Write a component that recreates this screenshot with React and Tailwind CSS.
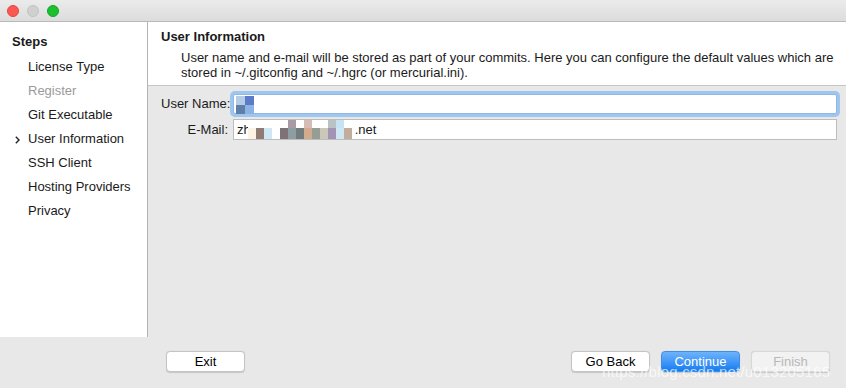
import React from 'react';

const steps = [
  { label: 'License Type' },
  { label: 'Register', disabled: true },
  { label: 'Git Executable' },
  { label: 'User Information', current: true },
  { label: 'SSH Client' },
  { label: 'Hosting Providers' },
  { label: 'Privacy' },
];

// pixelated blur over the e-mail address
const blurTop = ['#ffffff', '#ffffff', '#ffffff', '#ffffff', '#ffffff', '#a89ba4', '#ffffff', '#d6bcb2', '#ffffff', '#ffffff', '#b9c3c6', '#c6e3f3'];
const blurBottom = ['#fdf3e4', '#8f7b73', '#cfe6f4', '#ffffff', '#7f7277', '#8d9ea3', '#737b7c', '#d2ab8f', '#969c96', '#cbc7b9', '#a294b4', '#cfe6f4', '#c2ad9d'];

const Button = ({ children, variant = 'default' }) => {
  const styles = {
    default: 'bg-white border-[#c4c4c4] text-black',
    primary: 'bg-gradient-to-b from-[#6cb3fa] to-[#0b7cf3] border-[#3e8ee8] text-white',
    disabled: 'bg-[#f2f2f2] border-[#d8d8d8] text-[#b8b8b8]',
  };
  return (
    <button className={`w-[79px] h-[21px] rounded-[4px] border text-[13px] leading-[19px] shadow-[0_0.5px_1px_rgba(0,0,0,0.15)] ${styles[variant]}`}>
      {children}
    </button>
  );
};

const App = () => {
  return (
    <div
      className="w-[846px] h-[388px] bg-[#e8e8e8] flex flex-col overflow-hidden text-[#1a1a1a]"
      style={{ fontFamily: '"Liberation Sans", Arial, sans-serif' }}
    >
      <div className="h-[22px] shrink-0 bg-gradient-to-b from-[#ebebeb] to-[#dcdcdc] border-b border-[#b9b9b9] flex items-center gap-[8px] pl-[7px] pt-[1px]">
        <span className="w-[12px] h-[12px] rounded-full bg-[#fc5753] border border-[#df4744]" />
        <span className="w-[12px] h-[12px] rounded-full bg-[#d0d0d0] border border-[#c2c2c2]" />
        <span className="w-[12px] h-[12px] rounded-full bg-[#1bc02f] border border-[#14a527]" />
      </div>

      <div className="flex h-[315px] shrink-0">
        <div className="w-[148px] shrink-0 bg-white border-r border-[#b4b4b4] pt-[11px]">
          <div className="pl-[12px] text-[13px] font-bold leading-[18px]">Steps</div>
          <ul className="mt-[4px]">
            {steps.map((s) => (
              <li key={s.label} className="relative h-[24px] flex items-center pl-[28px] text-[13px]">
                {s.current && (
                  <svg className="absolute left-[15px] top-[9px]" width="5" height="8" viewBox="0 0 5 8">
                    <path d="M0.8 0.8 L4 4 L0.8 7.2" stroke="#222" strokeWidth="1.4" fill="none" />
                  </svg>
                )}
                <span className={s.disabled ? 'text-[#9a9a9a]' : 'text-[#1a1a1a]'}>{s.label}</span>
              </li>
            ))}
          </ul>
        </div>

        <div className="flex-1 flex flex-col">
          <div className="h-[64px] shrink-0 bg-white border-b border-[#c6c6c6] pl-[13px] pt-[6px]">
            <div className="text-[13px] font-bold leading-[17px]">User Information</div>
            <p className="mt-[5px] pl-[20px] text-[13px] leading-[15px] pr-[10px] whitespace-nowrap">
              User name and e-mail will be stored as part of your commits. Here you can configure the default values which are
              <br />
              stored in ~/.gitconfig and ~/.hgrc (or mercurial.ini).
            </p>
          </div>

          <div className="pl-[13px] pr-[9px] pt-[8px] flex flex-col gap-[5px]">
            <div className="flex items-center gap-[5px]">
              <label className="w-[67px] text-right text-[13px] shrink-0 whitespace-nowrap">User Name:</label>
              <div className="relative flex-1 h-[20px] bg-white border border-[#8fb8e8] rounded-[2px] shadow-[0_0_0_3px_#9fc6ef]">
                <div className="absolute left-[2px] top-[1px] grid grid-cols-2 w-[18px] h-[18px]">
                  <span className="bg-[#b6cbe6]" />
                  <span className="bg-[#5b7bc8]" />
                  <span className="bg-[#5e7fa8]" />
                  <span className="bg-[#8db3e4]" />
                </div>
              </div>
            </div>
            <div className="flex items-center gap-[5px]">
              <label className="w-[67px] text-right text-[13px] shrink-0 whitespace-nowrap">E-Mail:</label>
              <div className="relative flex-1 h-[21px] bg-white border border-[#bdbdbd] flex items-center pl-[3px] text-[13px]">
                <span>zh</span>
                <div className="absolute left-[14px] top-[0px] flex flex-col">
                  <div className="flex">
                    {blurTop.map((c, i) => (
                      <span key={i} className="w-[8px] h-[8px]" style={{ backgroundColor: c }} />
                    ))}
                  </div>
                  <div className="flex">
                    {blurBottom.map((c, i) => (
                      <span key={i} className="w-[8px] h-[11px]" style={{ backgroundColor: c }} />
                    ))}
                  </div>
                </div>
                <span className="ml-[104px]">.net</span>
              </div>
            </div>
          </div>
        </div>
      </div>

      <div className="relative flex-1 flex items-start pt-[14px] pl-[166px] pr-[16px]">
        <Button>Exit</Button>
        <div className="ml-auto flex gap-[11px]">
          <Button>Go Back</Button>
          <Button variant="primary">Continue</Button>
          <Button variant="disabled">Finish</Button>
        </div>
        <span className="absolute left-[602px] top-[24px] text-[15px] text-white/70 tracking-[0.2px]">
          https://blog.csdn.net/u013205165
        </span>
      </div>
    </div>
  );
};

export default App;
